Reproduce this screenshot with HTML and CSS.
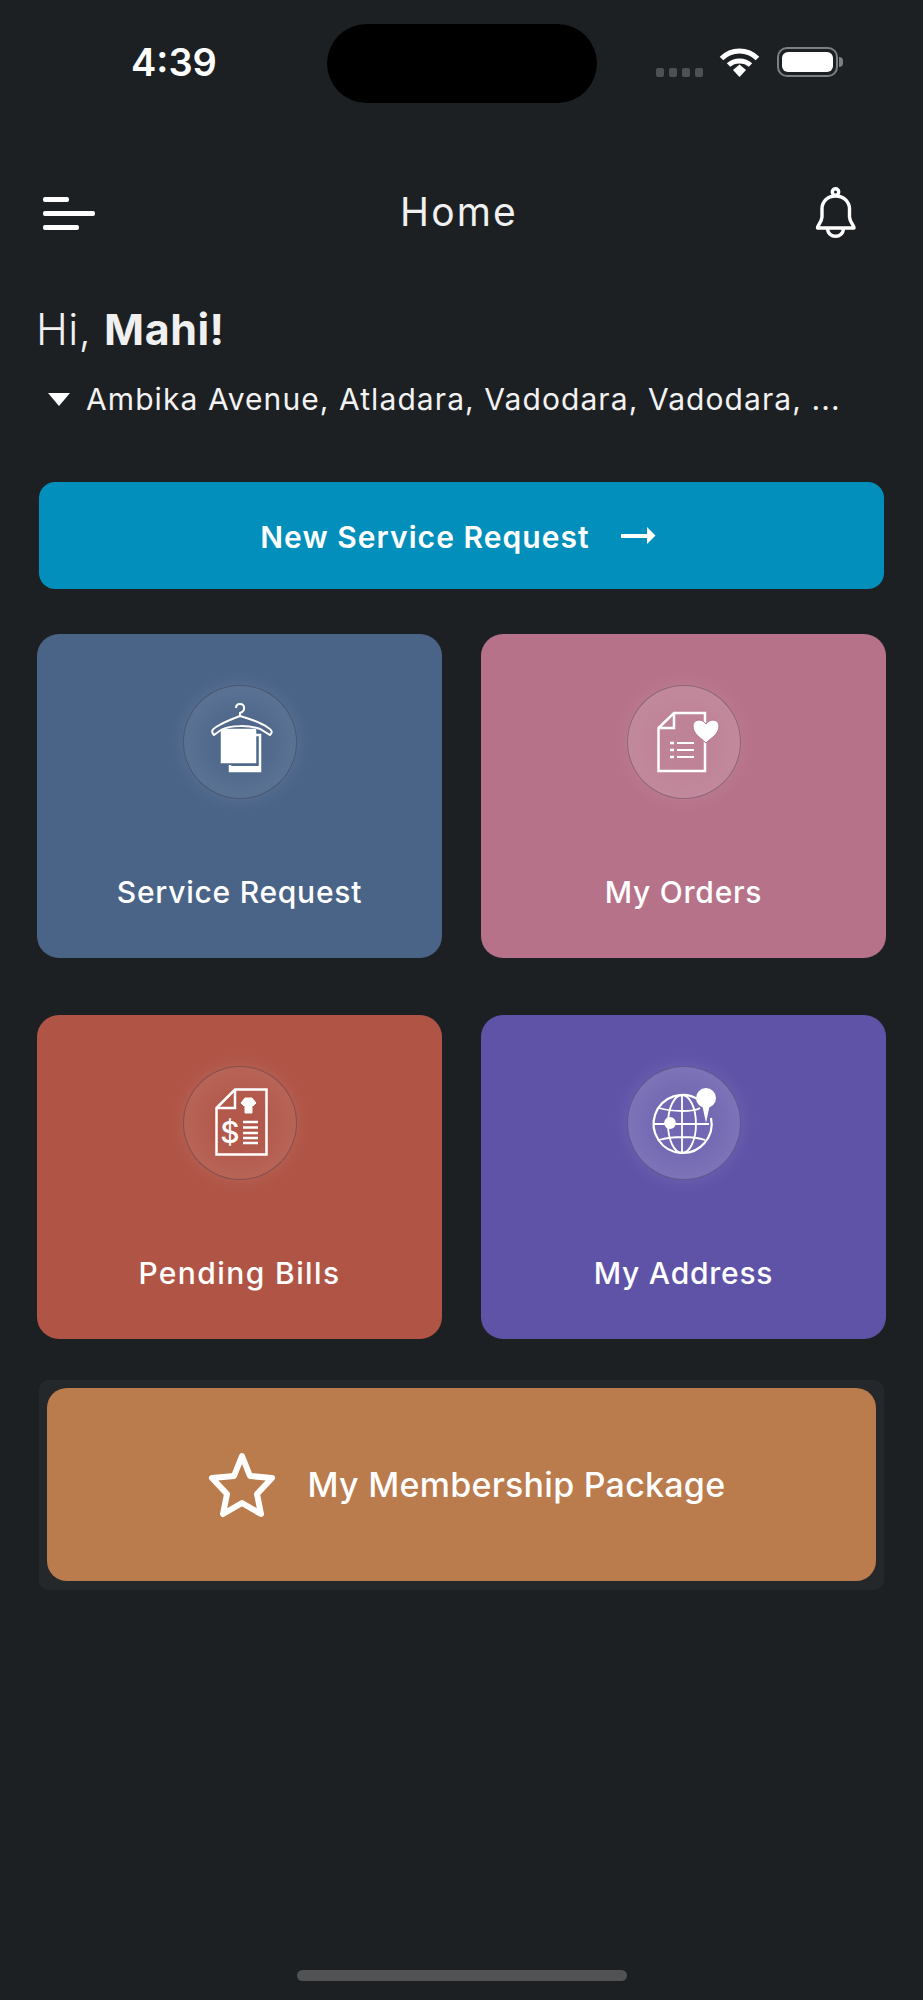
FILE: index.html
```html
<!DOCTYPE html>
<html lang="en">
<head>
<meta charset="utf-8">
<title>Home</title>
<link rel="stylesheet" href="styles.css">
</head>
<body>
<div class="screen">
  <div class="status">
    <div class="time">4:39</div>
    <div class="island"></div>
    <div class="indicators">
      <div class="signal"><i></i><i></i><i></i><i></i></div>
      <svg class="wifi" viewBox="0 0 40 30"><path d="M2 11.500C12 1.500 28 1.500 38 11.500" fill="none" stroke="#fff" stroke-width="5"/><path d="M9 18C15 12.500 25 12.500 31 18" fill="none" stroke="#fff" stroke-width="5"/><path d="M13.500 23L20 17.500 26.500 23 20 30Z" fill="#fff"/></svg>
      <div class="battery"><div class="battery-level"></div></div>
      <div class="battery-cap"></div>
    </div>
  </div>

  <header class="topbar">
    <div class="menu"><i class="m1"></i><i class="m2"></i><i class="m3"></i></div>
    <h1 class="title">Home</h1>
    <svg class="bell" viewBox="0 0 42 52" fill="none" stroke="#fff" stroke-width="3.400" stroke-linejoin="round"><path d="M2.500 41C2.500 38 6.500 36 7 30V22C7 14 13 9 20.500 9C28 9 34.500 14 34.500 22V30C35 36 39 38 39 41Z"/><circle cx="20.500" cy="5" r="3.200"/><path d="M12.500 41C12.500 52 28.500 52 28.500 41"/></svg>
  </header>

  <p class="greeting">Hi, <b>Mahi!</b></p>
  <div class="address"><span class="caret"></span><span class="address-text">Ambika Avenue, Atladara, Vadodara, Vadodara, ...</span></div>

  <div class="new-request">
    <span class="new-request-text">New Service Request</span>
    <svg class="arrow" viewBox="0 0 35 21"><path d="M0 9H26V2L34.500 10.500 26 19V13H0Z" fill="#fff"/></svg>
  </div>

  <section class="tiles">
    <div class="tile tile-blue">
      <div class="badge">
        <svg viewBox="23 16 113 113" fill="none" stroke="#fff" stroke-width="2">
          <path d="M61 61L54 66C51 63 51.500 61 56 58C64 53 72 50 80 47C90 50 100 53 107 58C112 61 113 63 110 66L100 60C90 56 70 56 61 61Z" stroke-width="2"/>
          <path d="M80 47V44C86 42 85 35 80 35C77 35 76 37 76 39"/>
          <rect x="61.500" y="60.500" width="34" height="33" fill="#fff" stroke="#fff" stroke-width="1.500"/>
          <path d="M96 66H100V102H70V96" stroke-width="2.500"/>
          <rect x="71" y="97" width="29" height="5" fill="#fff" stroke="none"/>
        </svg>
      </div>
      <div class="tile-label">Service Request</div>
    </div>
    <div class="tile tile-pink">
      <div class="badge">
        <svg viewBox="23 16 113 113" fill="none" stroke="#fff" stroke-width="2.500">
          <path d="M54.500 59L70 44H101V102H54.500Z"/>
          <path d="M54.500 59H70V44"/>
          <path d="M73 74H90M73 81H90M73 88H90" stroke-width="1.800"/>
          <path d="M66 74H70M66 81H70M66 88H70" stroke-width="2.400"/>
          <path d="M102 74C97 69 89 65 89 57C89 50 98 49 102 55C106 49 115 50 115 57C115 65 107 69 102 74Z" fill="#fff" stroke="#b67289" stroke-width="1"/>
        </svg>
      </div>
      <div class="tile-label">My Orders</div>
    </div>
    <div class="tile tile-red">
      <div class="badge">
        <svg viewBox="23 16 113 113" fill="none" stroke="#fff" stroke-width="2.500">
          <path d="M56.500 58L75 39.500H106.500V104.500H56.500Z"/>
          <path d="M56.500 58H75V39.500"/>
          <path d="M81 53L85 48H92L96 53 93 56 92 55V63H85V55L84 56Z" fill="#fff" stroke="#fff" stroke-width="1"/>
          <path d="M83 72H98M83 77.500H98M83 83H98M83 88H98M83 93H98" stroke-width="2.600"/>
          <text class="dollar" x="70" y="93" text-anchor="middle">$</text>
        </svg>
      </div>
      <div class="tile-label tile-label-wide">Pending Bills</div>
    </div>
    <div class="tile tile-purple">
      <div class="badge">
        <svg viewBox="23 16 113 113" fill="none" stroke="#fff" stroke-width="1.800">
          <path d="M95 50A29 29 0 1 0 107 68" stroke-width="2.200"/>
          <ellipse cx="78" cy="74" rx="14" ry="29"/>
          <path d="M78 45V103M49 74H105M55 58C68 62 90 62 96 58M55 90C68 86 90 86 101 90"/>
          <circle cx="66" cy="73" r="5" fill="#fff"/>
          <path d="M98 54L102 73 106 54Z" fill="#fff" stroke="none"/>
          <circle cx="102" cy="48" r="10" fill="#fff" stroke="none"/>
        </svg>
      </div>
      <div class="tile-label">My Address</div>
    </div>
  </section>

  <div class="membership-wrap">
    <div class="membership">
      <svg class="star" viewBox="0 0 68 66" fill="none" stroke="#fff" stroke-width="6" stroke-linejoin="round"><path d="M34 4L42 24 64 26 49 42 53 62 34 51 15 62 19 42 4 26 26 24Z"/></svg>
      <span>My Membership Package</span>
    </div>
  </div>

  <div class="home-indicator"></div>
</div>
</body>
</html>
```
FILE: styles.css
```css
* { box-sizing: border-box; }

html, body { margin: 0; padding: 0; }

body {
  background: #1d2023;
  color: #fff;
  font-family: Inter, "Liberation Sans", sans-serif;
}

.screen {
  min-height: 2000px;
  display: flex;
  flex-direction: column;
}

/* status bar */
.status {
  display: grid;
  grid-template-columns: 327px 270px 1fr;
  height: 103px;
  padding-top: 24px;
}

.time {
  padding: 10px 0 0 131px;
  font-size: 38px;
  font-weight: 600;
  line-height: 56px;
}

.island {
  height: 79px;
  border-radius: 40px;
  background: #000;
}

.indicators {
  display: flex;
  align-items: flex-start;
  padding: 23px 0 0 59px;
}

.signal {
  display: flex;
  gap: 5px;
  margin-top: 21px;
}

.signal i {
  width: 8px;
  height: 9px;
  border-radius: 2px;
  background: #4e5154;
}

.wifi {
  width: 41px;
  height: 30px;
  margin-left: 16px;
}

.battery {
  width: 61px;
  height: 30px;
  margin-left: 17px;
  padding: 3px;
  border: 2px solid #7c7e80;
  border-radius: 10px;
}

.battery-level {
  height: 100%;
  border-radius: 6px;
  background: #fff;
}

.battery-cap {
  width: 4px;
  height: 10px;
  margin: 10px 0 0 1px;
  border-radius: 0 4px 4px 0;
  background: #7c7e80;
}

/* title row */
.topbar {
  display: flex;
  align-items: center;
  justify-content: space-between;
  height: 60px;
  margin-top: 80px;
  padding: 0 66px 0 43px;
}

.menu {
  display: flex;
  flex-direction: column;
  gap: 9px;
  width: 52px;
}

.menu i {
  height: 5px;
  border-radius: 2px;
  background: #fff;
}

.menu .m1 { width: 26px; }
.menu .m2 { width: 52px; }
.menu .m3 { width: 36px; }

.title {
  margin: 0 0 3px 8px;
  font-size: 39px;
  font-weight: 400;
  letter-spacing: 2.2px;
  color: #f0f0f0;
}

.bell {
  width: 42px;
  height: 52px;
}

.greeting {
  margin: 56px 0 0 36px;
  font-size: 43px;
  font-weight: 300;
  letter-spacing: 0.5px;
  line-height: 60px;
  color: #f0f0f0;
}

.greeting b { font-weight: 700; }

.address {
  display: flex;
  align-items: center;
  margin: 18px 0 0 48px;
  height: 44px;
}

.caret {
  width: 0;
  height: 0;
  margin-right: 16px;
  border-left: 11.5px solid transparent;
  border-right: 11.5px solid transparent;
  border-top: 13px solid #fff;
}

.address-text {
  font-size: 30px;
  letter-spacing: 1.08px;
  color: #f2f2f2;
  white-space: nowrap;
}

/* primary action */
.new-request {
  display: flex;
  align-items: center;
  justify-content: center;
  gap: 31px;
  height: 107px;
  margin: 61px 39px 0;
  padding-right: 7px;
  border-radius: 16px;
  background: #028fbb;
  font-size: 30px;
  font-weight: 600;
  letter-spacing: 1.05px;
}

.new-request-text { padding-top: 3px; }

.arrow {
  width: 35px;
  height: 21px;
}

/* tile grid */
.tiles {
  display: grid;
  grid-template-columns: 405px 405px;
  justify-content: space-between;
  row-gap: 57px;
  margin: 45px 37px 0;
}

.tile {
  display: flex;
  flex-direction: column;
  align-items: center;
  height: 324px;
  padding-top: 51px;
  border-radius: 22px;
}

.tile-blue { background: #4a6488; }
.tile-pink { background: #b67289; }
.tile-red { background: #b05446; }
.tile-purple { background: #5f53a8; }

.badge {
  width: 114px;
  height: 114px;
  border-radius: 50%;
  border: 1.500px solid rgba(40, 40, 60, 0.35);
  background: radial-gradient(circle, rgba(255, 255, 255, 0.03) 30%, rgba(255, 255, 255, 0.14) 100%);
  box-shadow: 0 0 18px rgba(255, 255, 255, 0.1);
}

.tile-pink .badge { background: radial-gradient(circle, rgba(255, 255, 255, 0.12) 30%, rgba(255, 255, 255, 0.2) 100%); }
.tile-purple .badge { background: radial-gradient(circle, rgba(255, 255, 255, 0.12) 30%, rgba(255, 255, 255, 0.24) 100%); }

.badge svg {
  display: block;
  width: 113px;
  height: 113px;
  margin: -1px;
}

.dollar {
  fill: #fff;
  stroke: none;
  font-family: Inter, sans-serif;
  font-size: 30px;
  font-weight: 500;
}

.tile-label {
  margin-top: 71px;
  font-size: 30px;
  font-weight: 500;
  letter-spacing: 0.75px;
  line-height: 44px;
}

.tile-label-wide { letter-spacing: 1.4px; }

/* membership card */
.membership-wrap {
  height: 210px;
  margin: 41px 39px 0;
  padding: 8px;
  border-radius: 10px;
  background: #24282b;
}

.membership {
  display: flex;
  align-items: center;
  justify-content: center;
  gap: 32px;
  height: 193px;
  padding-left: 10px;
  border-radius: 20px;
  background: #ba7b4d;
  font-size: 34px;
  font-weight: 500;
  letter-spacing: 0.25px;
}

.star {
  width: 68px;
  height: 66px;
}

.home-indicator {
  width: 330px;
  height: 11px;
  margin: auto auto 19px;
  border-radius: 6px;
  background: #505254;
}
```
